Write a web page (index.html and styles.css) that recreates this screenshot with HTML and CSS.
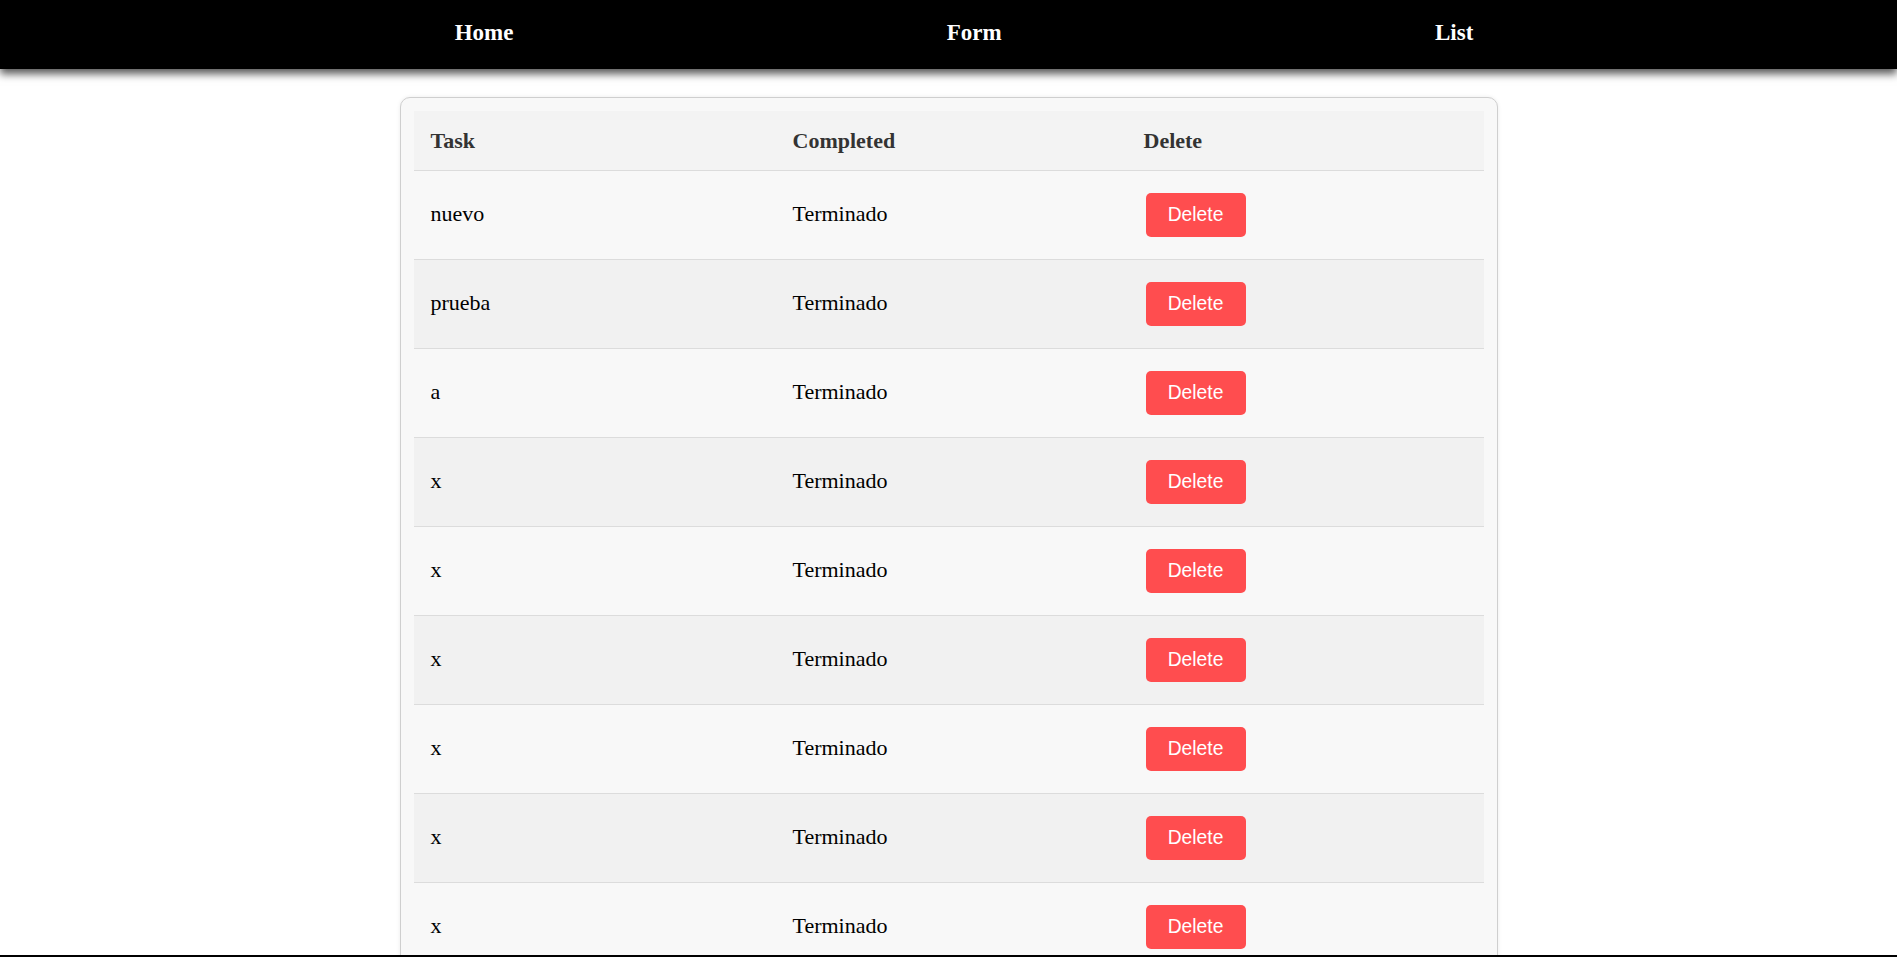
FILE: index.html
```html
<!DOCTYPE html>
<html lang="en">
<head>
<meta charset="utf-8">
<title>Task List</title>
<link rel="stylesheet" href="styles.css">
</head>
<body>
<nav class="topnav">
  <a class="navlink" href="#">Home</a>
  <a class="navlink" href="#">Form</a>
  <a class="navlink" href="#">List</a>
</nav>
<main class="card">
  <table class="tasks">
    <colgroup>
      <col class="col-task">
      <col class="col-done">
      <col class="col-del">
    </colgroup>
    <thead>
      <tr><th>Task</th><th>Completed</th><th>Delete</th></tr>
    </thead>
    <tbody>
      <tr><td>nuevo</td><td>Terminado</td><td><button class="btn-delete">Delete</button></td></tr>
      <tr><td>prueba</td><td>Terminado</td><td><button class="btn-delete">Delete</button></td></tr>
      <tr><td>a</td><td>Terminado</td><td><button class="btn-delete">Delete</button></td></tr>
      <tr><td>x</td><td>Terminado</td><td><button class="btn-delete">Delete</button></td></tr>
      <tr><td>x</td><td>Terminado</td><td><button class="btn-delete">Delete</button></td></tr>
      <tr><td>x</td><td>Terminado</td><td><button class="btn-delete">Delete</button></td></tr>
      <tr><td>x</td><td>Terminado</td><td><button class="btn-delete">Delete</button></td></tr>
      <tr><td>x</td><td>Terminado</td><td><button class="btn-delete">Delete</button></td></tr>
      <tr><td>x</td><td>Terminado</td><td><button class="btn-delete">Delete</button></td></tr>
      <tr><td>x</td><td>Terminado</td><td><button class="btn-delete">Delete</button></td></tr>
    </tbody>
  </table>
</main>
<div class="bottom-line"></div>
</body>
</html>
```

FILE: styles.css
```css
* { box-sizing: border-box; }

html, body {
  margin: 0;
  padding: 0;
  background: #ffffff;
  font-family: "Liberation Serif", "Times New Roman", serif;
  font-size: 22px;
  color: #000;
}

.topnav {
  height: 69px;
  background: #000;
  display: flex;
  align-items: center;
  justify-content: space-around;
  padding: 0 207px 0 238px;
  box-shadow: 0 5px 8px rgba(0, 0, 0, 0.65);
  position: relative;
  z-index: 1;
}

.navlink {
  color: #fff;
  text-decoration: none;
  font-weight: bold;
  font-size: 23px;
  margin-top: -3px;
}

.card {
  width: 1098px;
  margin: 28px auto 0;
  padding: 13px;
  background: #f8f8f8;
  border: 1px solid #cfcfcf;
  border-radius: 10px;
  box-shadow: 0 0 4px rgba(0, 0, 0, 0.08);
}

.tasks {
  width: 100%;
  border-collapse: separate;
  border-spacing: 0;
  table-layout: fixed;
}

.col-task { width: 362px; }
.col-done { width: 351px; }

.tasks th {
  text-align: left;
  font-weight: bold;
  color: #333;
  background: #f3f3f3;
  height: 60px;
  padding: 0 16px 0 17px;
  border-bottom: 1px solid #dcdcdc;
  vertical-align: middle;
}

.tasks td {
  height: 89px;
  padding: 0 16px 2px 17px;
  border-bottom: 1px solid #dcdcdc;
  vertical-align: middle;
  background: #f8f8f8;
}

.tasks tbody tr:nth-child(even) td {
  background: #f1f1f1;
}

.btn-delete {
  font-family: "Liberation Sans", Arial, sans-serif;
  font-size: 19.3px;
  color: #fff;
  background: #ff4d4f;
  border: none;
  border-radius: 5px;
  height: 44px;
  width: 100px;
  padding: 0;
  margin: 2px 0 0 2px;
  display: block;
  cursor: pointer;
}

.bottom-line {
  position: fixed;
  left: 0;
  right: 0;
  bottom: 0;
  height: 2px;
  background: #000;
  z-index: 5;
}
```
